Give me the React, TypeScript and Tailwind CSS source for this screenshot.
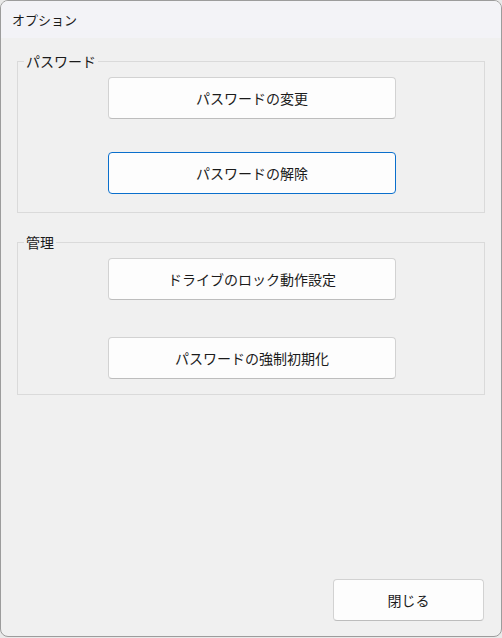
const font = { fontFamily: '"Noto Sans CJK JP", "Noto Sans", sans-serif' };

function Btn({ label, primary = false }: { label: string; primary?: boolean }) {
  return (
    <button
      className={
        primary
          ? "flex h-[42px] w-[288px] items-center justify-center rounded-[4px] border border-[#0a6fcc] bg-[#fdfdfd] text-[14px] leading-none text-[#1b1b1b]"
          : "flex h-[42px] w-[288px] items-center justify-center rounded-[4px] border border-[#d2d2d2] border-b-[#bdbdbd] bg-[#fdfdfd] text-[14px] leading-none text-[#1b1b1b]"
      }
    >
      {label}
    </button>
  );
}

function Group({
  title,
  children,
  className,
}: {
  title: string;
  children: React.ReactNode;
  className: string;
}) {
  return (
    <fieldset className={"ml-[16px] w-[468px] border border-[#dadada] " + className}>
      <legend className="ml-[6px] px-[2px] text-[14px] leading-[20px] text-[#1b1b1b]">{title}</legend>
      {children}
    </fieldset>
  );
}

export default function App() {
  return (
    <div className="h-[638px] w-[502px] bg-[#e9e9e9]" style={font}>
      <div className="flex h-[637px] w-[502px] flex-col overflow-hidden rounded-[8px] border border-[#9c9c9c] bg-[#f0f0f0]">
        <div className="flex h-[37px] items-center bg-[#f3f3f7] pl-[11px] text-[13px] text-[#1b1b1b]">
          オプション
        </div>

        <Group title="パスワード" className="mt-[13px] pb-[18px] pt-[6px]">
          <div className="flex flex-col gap-[33px] pl-[90px]">
            <Btn label="パスワードの変更" />
            <Btn label="パスワードの解除" primary />
          </div>
        </Group>

        <Group title="管理" className="mt-[19px] pb-[15px] pt-[6px]">
          <div className="flex flex-col gap-[37px] pl-[90px]">
            <Btn label="ドライブのロック動作設定" />
            <Btn label="パスワードの強制初期化" />
          </div>
        </Group>

        <div className="mb-[15px] mr-[17px] mt-auto flex justify-end">
          <button className="flex h-[42px] w-[151px] items-center justify-center rounded-[4px] border border-[#d2d2d2] border-b-[#bdbdbd] bg-[#fdfdfd] text-[14px] leading-none text-[#1b1b1b]">
            閉じる
          </button>
        </div>
      </div>
    </div>
  );
}
